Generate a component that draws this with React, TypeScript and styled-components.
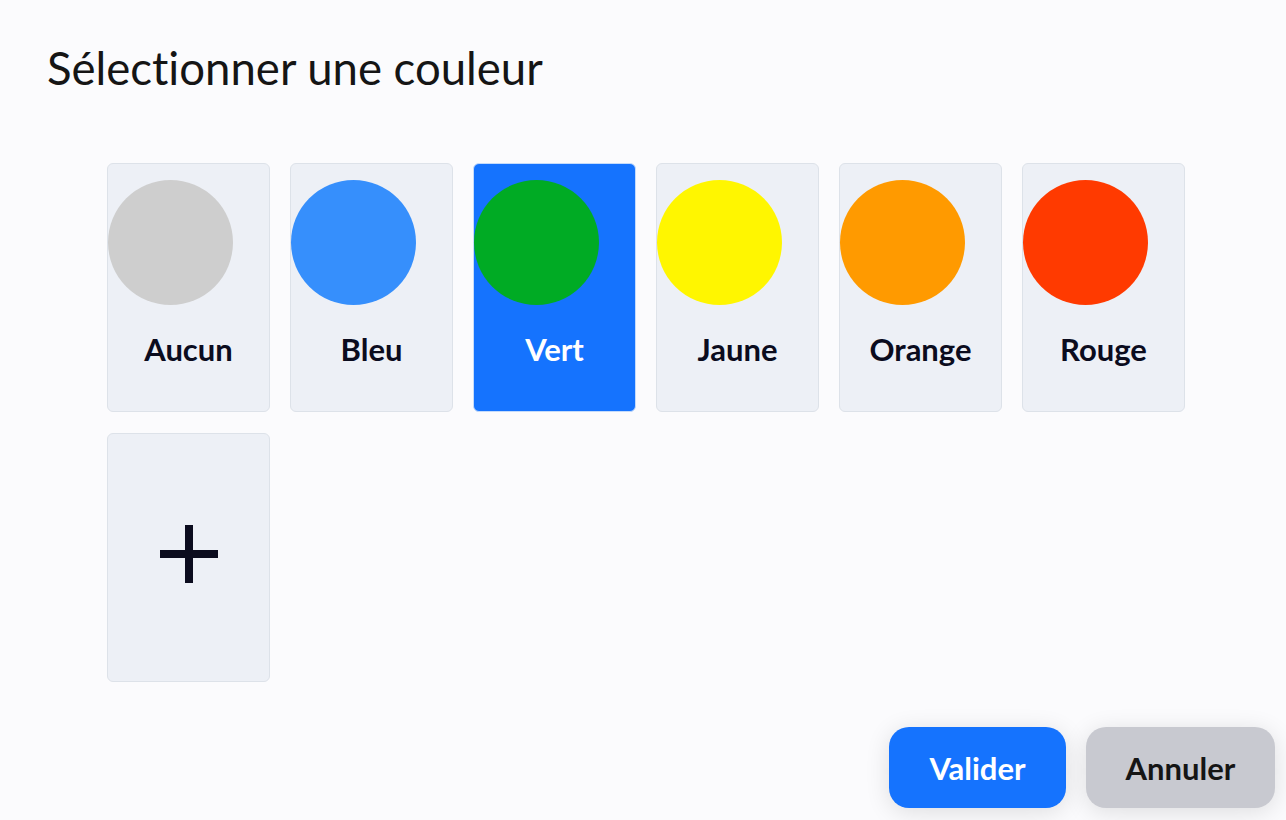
import React, { useState } from 'react';
import styled, { createGlobalStyle } from 'styled-components';

const GlobalStyle = createGlobalStyle`
  html, body {
    margin: 0;
    padding: 0;
    background: #fbfbfd;
  }
  body {
    font-family: Lato, 'Noto Sans', 'Liberation Sans', sans-serif;
    color: #0b0c1e;
    font-variant-ligatures: none;
  }
`;

type Swatch = { name: string; color: string };

const swatches: Swatch[] = [
  { name: 'Aucun', color: '#cecece' },
  { name: 'Bleu', color: '#368ffc' },
  { name: 'Vert', color: '#00ab24' },
  { name: 'Jaune', color: '#fff600' },
  { name: 'Orange', color: '#ff9a00' },
  { name: 'Rouge', color: '#ff3a00' },
];

const App = () => {
  const [selected, setSelected] = useState('Vert');

  return (
    <>
      <GlobalStyle />
      <Page>
        <Title>Sélectionner une couleur</Title>
        <Grid>
          {swatches.map((s) => (
            <Card
              key={s.name}
              $active={selected === s.name}
              onClick={() => setSelected(s.name)}
            >
              <Dot $color={s.color} />
              <Label $active={selected === s.name}>{s.name}</Label>
            </Card>
          ))}
          <AddCard>
            <PlusIcon width="58" height="58" viewBox="0 0 58 58">
              <rect x="25" y="0" width="8" height="58" fill="#0b0c1e" />
              <rect x="0" y="25" width="58" height="8" fill="#0b0c1e" />
            </PlusIcon>
          </AddCard>
        </Grid>
        <Footer>
          <Button $primary>Valider</Button>
          <Button>Annuler</Button>
        </Footer>
      </Page>
    </>
  );
};

export default App;

const Page = styled.div`
  width: 1286px;
  height: 820px;
  box-sizing: border-box;
  padding: 38px 11px 12px 47px;
  display: flex;
  flex-direction: column;
  overflow: hidden;
`;

const Title = styled.h1`
  margin: 0;
  font-size: 45.5px;
  font-weight: 400;
  line-height: 60px;
  color: #151515;
`;

const Grid = styled.div`
  margin: 65px 0 0 60px;
  display: grid;
  grid-template-columns: repeat(6, 163px);
  grid-auto-rows: 249px;
  column-gap: 20px;
  row-gap: 21px;
`;

const Card = styled.div<{ $active?: boolean }>`
  box-sizing: border-box;
  border-radius: 6px;
  border: 1px solid ${(p) => (p.$active ? '#c4dbfb' : '#dde2e9')};
  background: ${(p) => (p.$active ? '#1573fe' : '#edf0f6')};
  display: flex;
  flex-direction: column;
  align-items: stretch;
  padding-top: 16px;
  cursor: pointer;
`;

const Dot = styled.div<{ $color: string }>`
  width: 125px;
  height: 125px;
  border-radius: 50%;
  background: ${(p) => p.$color};
`;

const Label = styled.div<{ $active?: boolean }>`
  margin-top: 23px;
  text-align: center;
  font-size: 31px;
  font-weight: 700;
  line-height: 42px;
  color: ${(p) => (p.$active ? '#ffffff' : '#0b0c1e')};
`;

const AddCard = styled(Card)`
  padding: 0;
  align-items: center;
  justify-content: center;
`;

const PlusIcon = styled.svg`
  margin-bottom: 8px;
`;

const Footer = styled.div`
  margin-top: auto;
  display: flex;
  justify-content: flex-end;
  gap: 20px;
`;

const Button = styled.button<{ $primary?: boolean }>`
  height: 81px;
  padding: 0 36px;
  min-width: ${(p) => (p.$primary ? '177px' : '189px')};
  border: none;
  border-radius: 20px;
  font-family: Lato, 'Noto Sans', 'Liberation Sans', sans-serif;
  font-size: 31px;
  font-weight: 700;
  background: ${(p) => (p.$primary ? '#1573fe' : '#c8c9d0')};
  color: ${(p) => (p.$primary ? '#ffffff' : '#151515')};
  box-shadow: 0 4px 24px rgba(0, 0, 0, 0.12);
  cursor: pointer;
`;
